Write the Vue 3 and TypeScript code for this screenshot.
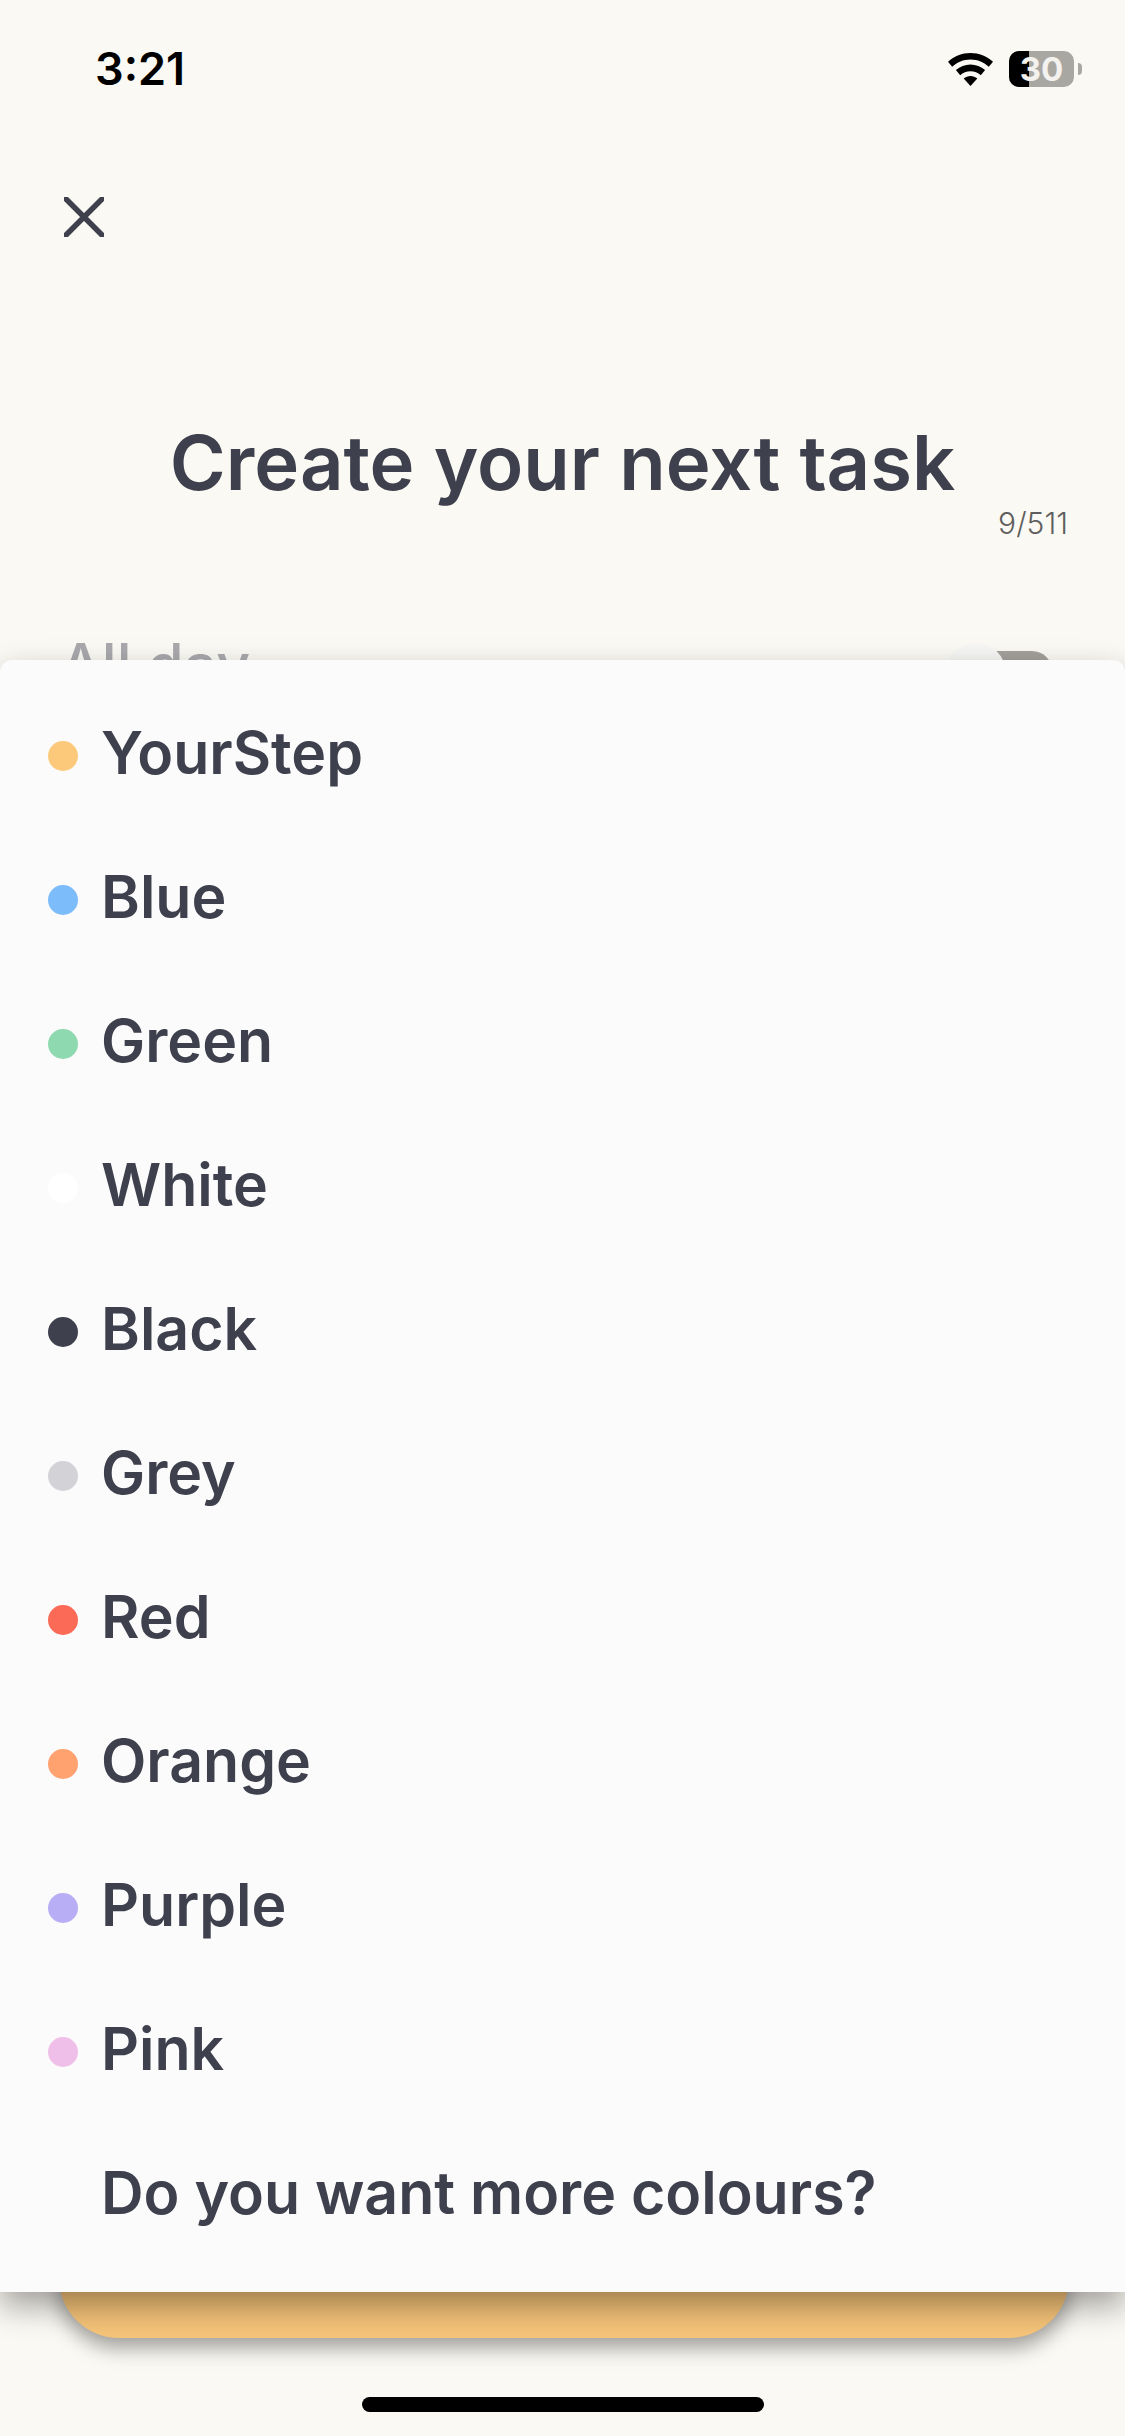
<script setup lang="ts">
interface Colour {
  name: string
  dot?: string
}

const colours: Colour[] = [
  { name: 'YourStep', dot: '#fcc97a' },
  { name: 'Blue', dot: '#7cbcfb' },
  { name: 'Green', dot: '#8fd9b0' },
  { name: 'White', dot: '#ffffff' },
  { name: 'Black', dot: '#3f404d' },
  { name: 'Grey', dot: '#d3d3d7' },
  { name: 'Red', dot: '#fb6a57' },
  { name: 'Orange', dot: '#ffa26f' },
  { name: 'Purple', dot: '#b8aef5' },
  { name: 'Pink', dot: '#f0bfe9' },
  { name: 'Do you want more colours?' },
]
</script>

<template>
  <div class="screen">
    <header class="status">
      <span class="time">3:21</span>
      <div class="status-icons">
        <svg class="wifi" viewBox="0 0 45 33" aria-hidden="true">
          <path d="M22.5 0C14 0 6.3 3.2 0 8.8l4.2 5C9 9.4 15.4 6.6 22.5 6.6s13.500 2.800 18.300 7.200l4.200-5C38.700 3.200 31 0 22.500 0z" />
          <path d="M22.500 11.500c-5.500 0-10.500 2.100-14.600 5.600l4.300 5.100c2.800-2.400 6.400-3.900 10.300-3.900s7.500 1.500 10.300 3.900l4.300-5.100c-4.100-3.500-9.100-5.600-14.600-5.600z" />
          <path d="M22.500 23c-2.500 0-4.900 1-6.800 2.500l6.800 7.500 6.800-7.500c-1.900-1.500-4.300-2.500-6.800-2.500z" />
        </svg>
        <div class="battery">
          <div class="battery-fill"></div>
          <span class="battery-level">30</span>
        </div>
        <div class="battery-nub"></div>
      </div>
    </header>

    <button class="close" type="button" aria-label="Close">
      <svg viewBox="0 0 40 40" aria-hidden="true">
        <path d="M2 2l36 36M38 2L2 38" />
      </svg>
    </button>

    <h1 class="title">Create your next task</h1>
    <p class="counter">9/511</p>

    <div class="allday">
      <span class="allday-label">All day</span>
      <div class="toggle">
        <div class="toggle-thumb"></div>
      </div>
    </div>

    <div class="cta"></div>
    <div class="home-bar"></div>

    <ul class="sheet">
      <li v-for="c in colours" :key="c.name" class="row">
        <span v-if="c.dot" class="dot" :style="{ background: c.dot }"></span>
        <span class="label">{{ c.name }}</span>
      </li>
    </ul>
  </div>
</template>

<style>
html, body { margin: 0; padding: 0; }
</style>

<style scoped>
.screen {
  position: relative;
  width: 1125px;
  height: 2436px;
  overflow: hidden;
  background: #fbf9f3;
  color: #3f404d;
  font-family: Inter, "Noto Sans", sans-serif;
  display: flex;
  flex-direction: column;
}
.status {
  display: flex;
  justify-content: space-between;
  align-items: center;
  height: 36px;
  padding: 51px 43px 0 95px;
  color: #000;
}
.time {
  font-size: 45px;
  font-weight: 600;
  line-height: 36px;
}
.status-icons {
  display: flex;
  align-items: center;
}
.wifi {
  width: 45px;
  height: 33px;
  fill: #000;
  margin-right: 16px;
}
.battery {
  position: relative;
  width: 65px;
  height: 36px;
  border-radius: 10px;
  background: #a9a7a2;
  display: flex;
  align-items: center;
  justify-content: center;
}
.battery-fill {
  position: absolute;
  left: 0;
  top: 0;
  bottom: 0;
  width: 20px;
  border-radius: 10px 0 0 10px;
  background: #000;
}
.battery-level {
  position: relative;
  font-size: 33px;
  line-height: 36px;
  font-weight: 700;
  color: #f4f2ee;
}
.battery-nub {
  width: 4px;
  height: 12px;
  margin-left: 4px;
  border-radius: 0 4px 4px 0;
  background: #a9a7a2;
}
.close {
  width: 40px;
  height: 40px;
  margin: 110px 0 0 64px;
  padding: 0;
  border: 0;
  background: none;
}
.close svg {
  display: block;
  width: 40px;
  height: 40px;
  fill: none;
  stroke: #3f404d;
  stroke-width: 5.500;
  stroke-linecap: round;
}
.title {
  margin: 180px 0 0;
  font-size: 76px;
  line-height: 90px;
  font-weight: 600;
  text-align: center;
}
.counter {
  margin: -2px 57px 0 0;
  font-size: 30px;
  line-height: 36px;
  font-weight: 300;
  color: #5f5f5f;
  text-align: right;
}
.allday {
  display: flex;
  justify-content: space-between;
  align-items: center;
  margin-top: 88px;
  padding: 0 73px 0 60px;
  height: 70px;
}
.allday-label {
  font-size: 59px;
  font-weight: 500;
  color: #a9a9ad;
}
.toggle {
  position: relative;
  width: 102px;
  height: 40px;
  margin-top: 14px;
  border-radius: 20px;
  background: #a3a09b;
}
.toggle-thumb {
  position: absolute;
  left: -4px;
  top: -8px;
  width: 60px;
  height: 60px;
  border-radius: 50%;
  background: #f6f6f5;
}
.cta {
  margin: auto 56px 0 59px;
  height: 120px;
  border-radius: 60px;
  background: #f6c479;
  box-shadow: 0 10px 20px rgba(0, 0, 0, 0.36);
}
.home-bar {
  align-self: center;
  width: 402px;
  height: 15px;
  margin: 59px 0 24px;
  border-radius: 8px;
  background: #000;
}
.sheet {
  position: absolute;
  left: 0;
  right: 0;
  top: 660px;
  height: 1632px;
  box-sizing: border-box;
  margin: 0;
  padding: 20px 0 28px;
  list-style: none;
  background: #fbfbfb;
  border-radius: 12px 12px 0 0;
  box-shadow: 0 14px 32px rgba(0, 0, 0, 0.36);
}
.row {
  display: flex;
  align-items: center;
  height: 144px;
  padding-left: 101px;
  position: relative;
}
.dot {
  position: absolute;
  left: 48px;
  top: 61px;
  width: 30px;
  height: 30px;
  border-radius: 50%;
}
.label {
  font-size: 59px;
  font-weight: 600;
}
</style>
